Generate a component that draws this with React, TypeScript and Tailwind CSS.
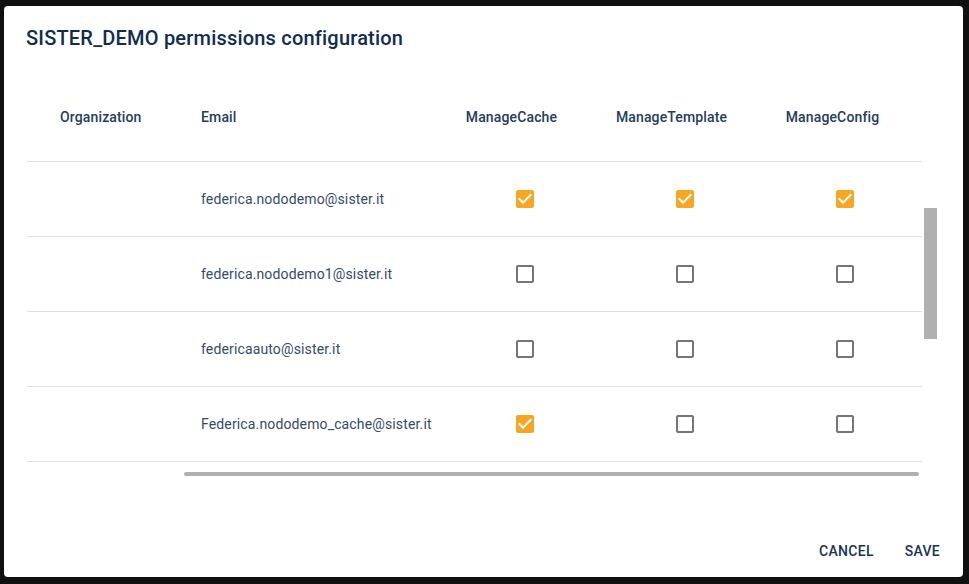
import React from 'react';

type Row = {
  email: string;
  cache: boolean;
  template: boolean;
  config: boolean;
};

const rows: Row[] = [
  { email: 'federica.nododemo@sister.it', cache: true, template: true, config: true },
  { email: 'federica.nododemo1@sister.it', cache: false, template: false, config: false },
  { email: 'federicaauto@sister.it', cache: false, template: false, config: false },
  { email: 'Federica.nododemo_cache@sister.it', cache: true, template: false, config: false },
];

function Check({ checked }: { checked: boolean }) {
  if (checked) {
    return (
      <svg width="24" height="24" viewBox="0 0 24 24">
        <rect x="4" y="4" width="16" height="16" fill="#fff" />
        <path
          fill="#f6a623"
          d="M19 3H5c-1.11 0-2 .9-2 2v14c0 1.1.89 2 2 2h14c1.11 0 2-.9 2-2V5c0-1.1-.89-2-2-2zm-9 14l-5-5 1.41-1.41L10 14.17l7.59-7.59L19 8l-9 9z"
        />
      </svg>
    );
  }
  return (
    <svg width="24" height="24" viewBox="0 0 24 24">
      <path
        fill="#757575"
        d="M19 5v14H5V5h14m0-2H5c-1.1 0-2 .9-2 2v14c0 1.1.9 2 2 2h14c1.1 0 2-.9 2-2V5c0-1.1-.9-2-2-2z"
      />
    </svg>
  );
}

const cols = 'grid grid-cols-[158px_260px_160px_160px_157px]';

export default function App() {
  return (
    <div
      className="min-h-screen bg-[#101010] pt-[6px] pl-[4px]"
      style={{ fontFamily: 'Roboto, "Liberation Sans", sans-serif' }}
    >
      <div className="w-[959px] h-[571px] bg-white rounded flex flex-col">
        <h2 className="pl-[22px] pt-4 pb-4 text-[20px] leading-8 font-medium tracking-[0.01em] text-[#102d4f]">
          SISTER_DEMO permissions configuration
        </h2>

        <div className="flex pl-[23px]">
          <div className="w-[895px]">
            <div className={`${cols} h-[92px] border-b border-[#e0e0e0] items-center pt-[2px] text-sm font-medium tracking-[0.01em] text-[#243d5c]`}>
              <div className="pl-[33px]">Organization</div>
              <div className="pl-4">Email</div>
              <div className="flex justify-center pr-[27px]">ManageCache</div>
              <div className="flex justify-center pr-[27px]">ManageTemplate</div>
              <div className="flex justify-center pr-[22px]">ManageConfig</div>
            </div>

            {rows.map((r) => (
              <div key={r.email} className={`${cols} h-[75px] border-b border-[#e0e0e0] items-center text-sm tracking-[0.01em] text-[#354b66]`}>
                <div />
                <div className="pl-4">{r.email}</div>
                <div className="flex justify-center">
                  <Check checked={r.cache} />
                </div>
                <div className="flex justify-center">
                  <Check checked={r.template} />
                </div>
                <div className="flex justify-center pl-[3px]">
                  <Check checked={r.config} />
                </div>
              </div>
            ))}

            <div className="mt-[10px] ml-[157px] w-[735px] h-1 rounded-full bg-[#b0b0b0]" />
          </div>

          <div className="ml-[2px] pt-[138px]">
            <div className="w-[13px] h-[131px] bg-[#b0b0b0]" />
          </div>
        </div>

        <div className="mt-auto flex justify-end gap-[15px] pr-[15px] pb-2">
          <button className="h-9 px-2 text-sm font-medium uppercase tracking-[0.02em] text-[#1a3354]">
            Cancel
          </button>
          <button className="h-9 px-2 text-sm font-medium uppercase tracking-[0.02em] text-[#1a3354]">
            Save
          </button>
        </div>
      </div>
    </div>
  );
}
